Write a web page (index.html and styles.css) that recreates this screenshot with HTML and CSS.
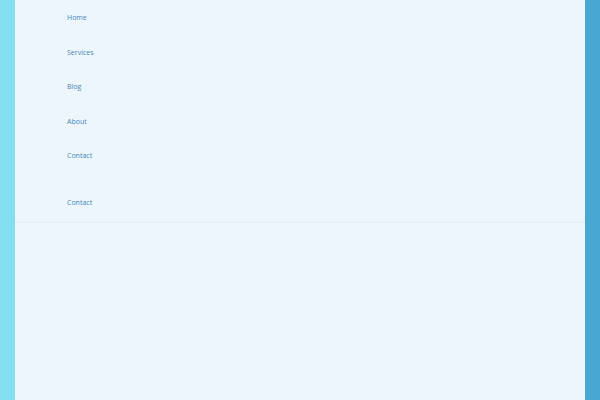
FILE: index.html
```html
<!DOCTYPE html>
<html lang="en">
<head>
<meta charset="utf-8">
<title>Menu</title>
<link rel="stylesheet" href="styles.css">
</head>
<body>
<div class="page">
  <div class="container">
    <header class="header">
      <nav class="nav">
        <a class="nav-link" href="#">Home</a>
        <a class="nav-link" href="#">Services</a>
        <a class="nav-link" href="#">Blog</a>
        <a class="nav-link" href="#">About</a>
        <a class="nav-link" href="#">Contact</a>
      </nav>
      <div class="extra">
        <a class="nav-link" href="#">Contact</a>
      </div>
    </header>
    <main class="main"></main>
  </div>
</div>
</body>
</html>
```
FILE: styles.css
```css
html, body {
  margin: 0;
  padding: 0;
  height: 100%;
}
body {
  font-family: "Open Sans", "DejaVu Sans", sans-serif;
  background: linear-gradient(to right, #86def2 0%, #6cc7e8 50%, #48a6d3 100%);
  overflow: hidden;
}
.page {
  height: 100%;
  padding: 0 15px;
  box-sizing: border-box;
}
.container {
  background: #eef6fd;
  height: 100%;
  display: flex;
  flex-direction: column;
}
.header {
  padding-left: 52px;
  padding-top: 1px;
  border-bottom: 2px solid #e7eef5;
}
.nav {
  display: flex;
  flex-direction: column;
}
.nav-link {
  display: block;
  height: 34.5px;
  line-height: 34.5px;
  font-size: 7px;
  color: #4287b9;
  text-decoration: none;
}
.extra {
  margin-top: 12.5px;
}
.main {
  flex: 1;
}
```
